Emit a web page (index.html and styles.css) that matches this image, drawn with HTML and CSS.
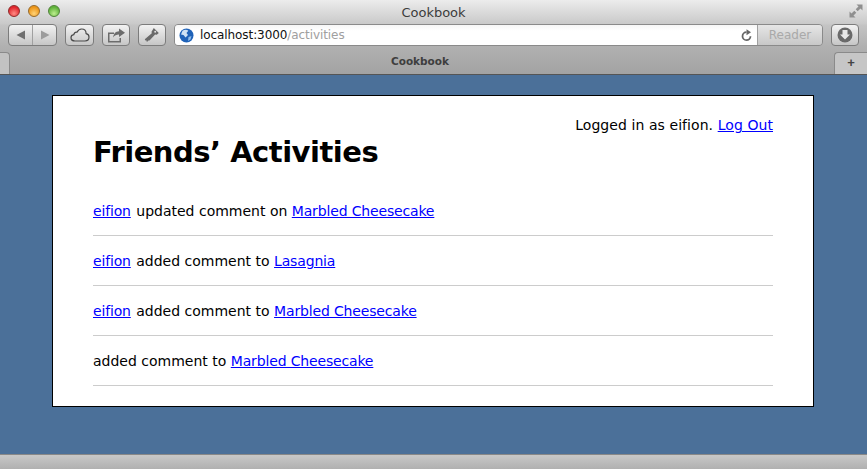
FILE: index.html
```html
<!DOCTYPE html>
<html lang="en">
<head>
    <meta charset="UTF-8">
    <meta name="viewport" content="width=device-width, initial-scale=1.0">
    <title>Cookbook</title>
    <link rel="stylesheet" href="styles.css">
</head>
<body>
    <div class="browser">
        <div class="chrome">
            <div class="titlebar">
                <div class="lights">
                    <span class="light red"></span>
                    <span class="light yellow"></span>
                    <span class="light green"></span>
                </div>
                <span class="window-title">Cookbook</span>
                <svg class="fullscreen" width="14" height="14" viewBox="0 0 14 14">
                    <path d="M7.500 0.500h6v6l-2-2-2.800 2.800-2-2 2.800-2.800z" fill="#8f8f8f"/>
                    <path d="M0.500 13.500v-6l2 2 2.800-2.800 2 2-2.800 2.800 2 2z" fill="#8f8f8f"/>
                </svg>
            </div>

            <div class="toolbar">
                <div class="btn nav-btn">
                    <span class="nav-half">
                        <svg width="10" height="10" viewBox="0 0 10 10"><path d="M9 0.500v9L0.500 5z" fill="#6f6f6f"/></svg>
                    </span>
                    <span class="nav-half">
                        <svg width="10" height="10" viewBox="0 0 10 10"><path d="M1 0.500v9L9.500 5z" fill="#9c9c9c"/></svg>
                    </span>
                </div>
                <div class="btn cloud-btn">
                    <svg width="20" height="14" viewBox="0 0 20 14">
                        <path d="M5 13C2.600 13 1 11.600 1 9.700 1 8 2.200 6.900 3.800 6.700 4.200 4.900 5.500 4 7 4.200 8 2.200 9.600 1 11.600 1c2.700 0 4.500 2 4.500 4.600 1.700.3 2.900 1.700 2.900 3.500 0 2.200-1.600 3.900-4 3.900z" fill="none" stroke="#4a4a4a" stroke-width="1.200"/>
                    </svg>
                </div>
                <div class="btn share-btn">
                    <svg width="19" height="15" viewBox="0 0 19 15">
                        <path d="M1 4.500h6v1.500H2.500v7h10v-3H14v4.500H1z" fill="#6c6c6c"/>
                        <path d="M12 0.500l6 4.300-6 4.200V6.500c-2.600 0-4.400.8-5.800 3 .2-3.700 2.500-6 5.800-6.200z" fill="#6c6c6c"/>
                    </svg>
                </div>
                <div class="btn key-btn">
                    <svg width="16" height="16" viewBox="0 0 16 16">
                        <path d="M9.800 1l5 5-2 1.700-1.700-.3-5.600 6-1.200.2-.5 1-1.300-.2-.2-1.200-1 .2-.5-1.200L7.800 6.200l-.3-1.500z" fill="#6a6a6a"/>
                        <circle cx="11.200" cy="4.700" r="1" fill="#e2e2e2"/>
                    </svg>
                </div>
                <div class="address">
                    <div class="url-field">
                        <svg class="globe" width="15" height="15" viewBox="0 0 15 15">
                            <circle cx="7.500" cy="7.500" r="7" fill="#1f62b8"/>
                            <path d="M3.500 2.800c2-1.300 4.500-1.300 5.800 0L7.500 5 9 7 6.500 9.500 4.500 7 2 6.500z" fill="#cfe2f4"/>
                            <path d="M9.500 9l3-1-1 3.500-2.500 1.500z" fill="#8fbbe8"/>
                        </svg>
                        <span class="url">localhost:3000<span class="url-path">/activities</span></span>
                        <svg class="reload" width="11" height="13" viewBox="0 0 11 13">
                            <path d="M5.500 3.200a4 4 0 1 0 4 4.100" fill="none" stroke="#666" stroke-width="1.800"/>
                            <path d="M5.500 0.200l4.500 3-4.500 3z" fill="#666"/>
                        </svg>
                    </div>
                    <div class="reader">Reader</div>
                </div>
                <div class="btn download-btn">
                    <svg width="16" height="16" viewBox="0 0 16 16">
                        <circle cx="8" cy="8" r="7.500" fill="#6a6a6a"/>
                        <path d="M5.500 3h5v4.500h2.500L8 12.500 3 7.500h2.500z" fill="#e8e8e8"/>
                    </svg>
                </div>
            </div>

            <div class="tabbar">
                <span class="tab-stub"></span>
                <span class="tab-title">Cookbook</span>
                <span class="tab-new">+</span>
            </div>
        </div>

        <main class="page">
            <div class="card">
                <p class="user-nav">Logged in as eifion. <a href="#">Log Out</a></p>
                <h1>Friends’ Activities</h1>
                <ul class="activities">
                    <li><a href="#">eifion</a> updated comment on <a href="#">Marbled Cheesecake</a></li>
                    <li><a href="#">eifion</a> added comment to <a href="#">Lasagnia</a></li>
                    <li><a href="#">eifion</a> added comment to <a href="#">Marbled Cheesecake</a></li>
                    <li>added comment to <a href="#">Marbled Cheesecake</a></li>
                </ul>
            </div>
        </main>

        <div class="statusbar"></div>
    </div>
</body>
</html>
```

FILE: styles.css
```css
html, body {
    margin: 0;
    height: 100%;
    overflow: hidden;
}
body {
    font-family: "DejaVu Sans", Verdana, sans-serif;
    color: #000;
}
.browser {
    display: flex;
    flex-direction: column;
    height: 469px;
}

/* window chrome */
.chrome {
    height: 75px;
    flex: none;
    background: linear-gradient(#ececec, #c9c9c9 24px, #c4c4c4 25px, #b0b0b0 47px, #a3a3a3 74px);
    border-bottom: 1px solid #555;
    box-sizing: border-box;
}
.titlebar {
    height: 24px;
    display: flex;
    align-items: center;
    justify-content: center;
    position: relative;
}
.lights {
    position: absolute;
    left: 8px;
    top: 5px;
    display: flex;
    gap: 8px;
}
.light {
    width: 12px;
    height: 12px;
    box-sizing: border-box;
    border-radius: 50%;
    border: 1px solid;
}
.red { background: radial-gradient(circle at 50% 75%, #ff8b84, #e0252c 70%); border-color: #8e2a2a; }
.yellow { background: radial-gradient(circle at 50% 75%, #ffd377, #ec9416 70%); border-color: #96692a; }
.green { background: radial-gradient(circle at 50% 75%, #bdee8e, #5fb23a 70%); border-color: #4f8239; }
.window-title {
    font-size: 13px;
    color: #3c3c3c;
}
.fullscreen {
    position: absolute;
    right: 4px;
    top: 4px;
}
.toolbar {
    height: 22px;
    display: flex;
    align-items: stretch;
    padding: 0 8px;
    gap: 8px;
}
.btn {
    box-sizing: border-box;
    border: 1px solid #7c7c7c;
    border-radius: 4px;
    background: linear-gradient(#f2f2f2, #c6c6c6);
    display: flex;
    align-items: center;
    justify-content: center;
}
.nav-btn { width: 49px; }
.nav-half {
    flex: 1;
    height: 100%;
    display: flex;
    align-items: center;
    justify-content: center;
}
.nav-half:first-child { border-right: 1px solid #a0a0a0; }
.cloud-btn { width: 29px; }
.share-btn { width: 28px; }
.key-btn { width: 28px; }
.download-btn { width: 28px; }
.address {
    flex: 1;
    display: flex;
    box-sizing: border-box;
    border: 1px solid #8a8a8a;
    border-radius: 4px;
    overflow: hidden;
}
.url-field {
    flex: 1;
    display: flex;
    align-items: center;
    background: linear-gradient(#f6f6f6, #fff 30%);
    padding: 0 5px 0 4px;
}
.globe { flex: none; }
.url {
    flex: 1;
    margin-left: 6px;
    font-size: 12px;
    letter-spacing: -0.08px;
    color: #111;
}
.url-path { color: #a0a0a0; }
.reader {
    width: 64px;
    display: flex;
    align-items: center;
    justify-content: center;
    border-left: 1px solid #a0a0a0;
    background: linear-gradient(#e6e6e6, #c8c8c8);
    font-size: 12px;
    color: #a9a9a9;
}
.tabbar {
    height: 28px;
    display: flex;
    align-items: flex-end;
    justify-content: space-between;
    position: relative;
}
.tab-stub {
    width: 10px;
    height: 22px;
    box-sizing: border-box;
    background: #c2c2c2;
    border: 1px solid #8a8a8a;
    border-width: 1px 1px 0 0;
    border-radius: 0 4px 0 0;
}
.tab-title {
    position: absolute;
    left: 0;
    right: 27px;
    top: 9px;
    text-align: center;
    font-size: 10.500px;
    font-weight: bold;
    color: #3e3e3e;
}
.tab-new {
    width: 33px;
    height: 22px;
    box-sizing: border-box;
    background: #c6c6c6;
    border: 1px solid #8a8a8a;
    border-width: 1px 0 0 1px;
    border-radius: 4px 0 0 0;
    text-align: center;
    font: bold 13px/20px "Liberation Sans", Arial, sans-serif;
    color: #444;
}

/* page */
.page {
    flex: 1;
    background: #4b7099;
    padding: 20px 53px 0 52px;
}
.card {
    background: #fff;
    border: 1px solid #000;
    height: 312px;
    box-sizing: border-box;
    padding: 20px 40px 0;
}
.user-nav {
    margin: 0;
    text-align: right;
    font-size: 14px;
    line-height: 18px;
    letter-spacing: 0.07px;
}
h1 {
    margin: 0;
    font-size: 29px;
    line-height: 36px;
    letter-spacing: -0.5px;
}
.activities {
    list-style: none;
    margin: 16px 0 0;
    padding: 0;
}
.activities li {
    font-size: 14px;
    line-height: 18px;
    padding: 16px 0 15px;
    border-bottom: 1px solid #ccc;
}
.activities a {
    letter-spacing: -0.16px;
    margin-right: 1px;
}
a { color: #00f; }

.statusbar {
    height: 15px;
    flex: none;
    box-sizing: border-box;
    border-top: 1px solid #888;
    background: linear-gradient(#c8c8c8, #b0b0b0);
}
```
